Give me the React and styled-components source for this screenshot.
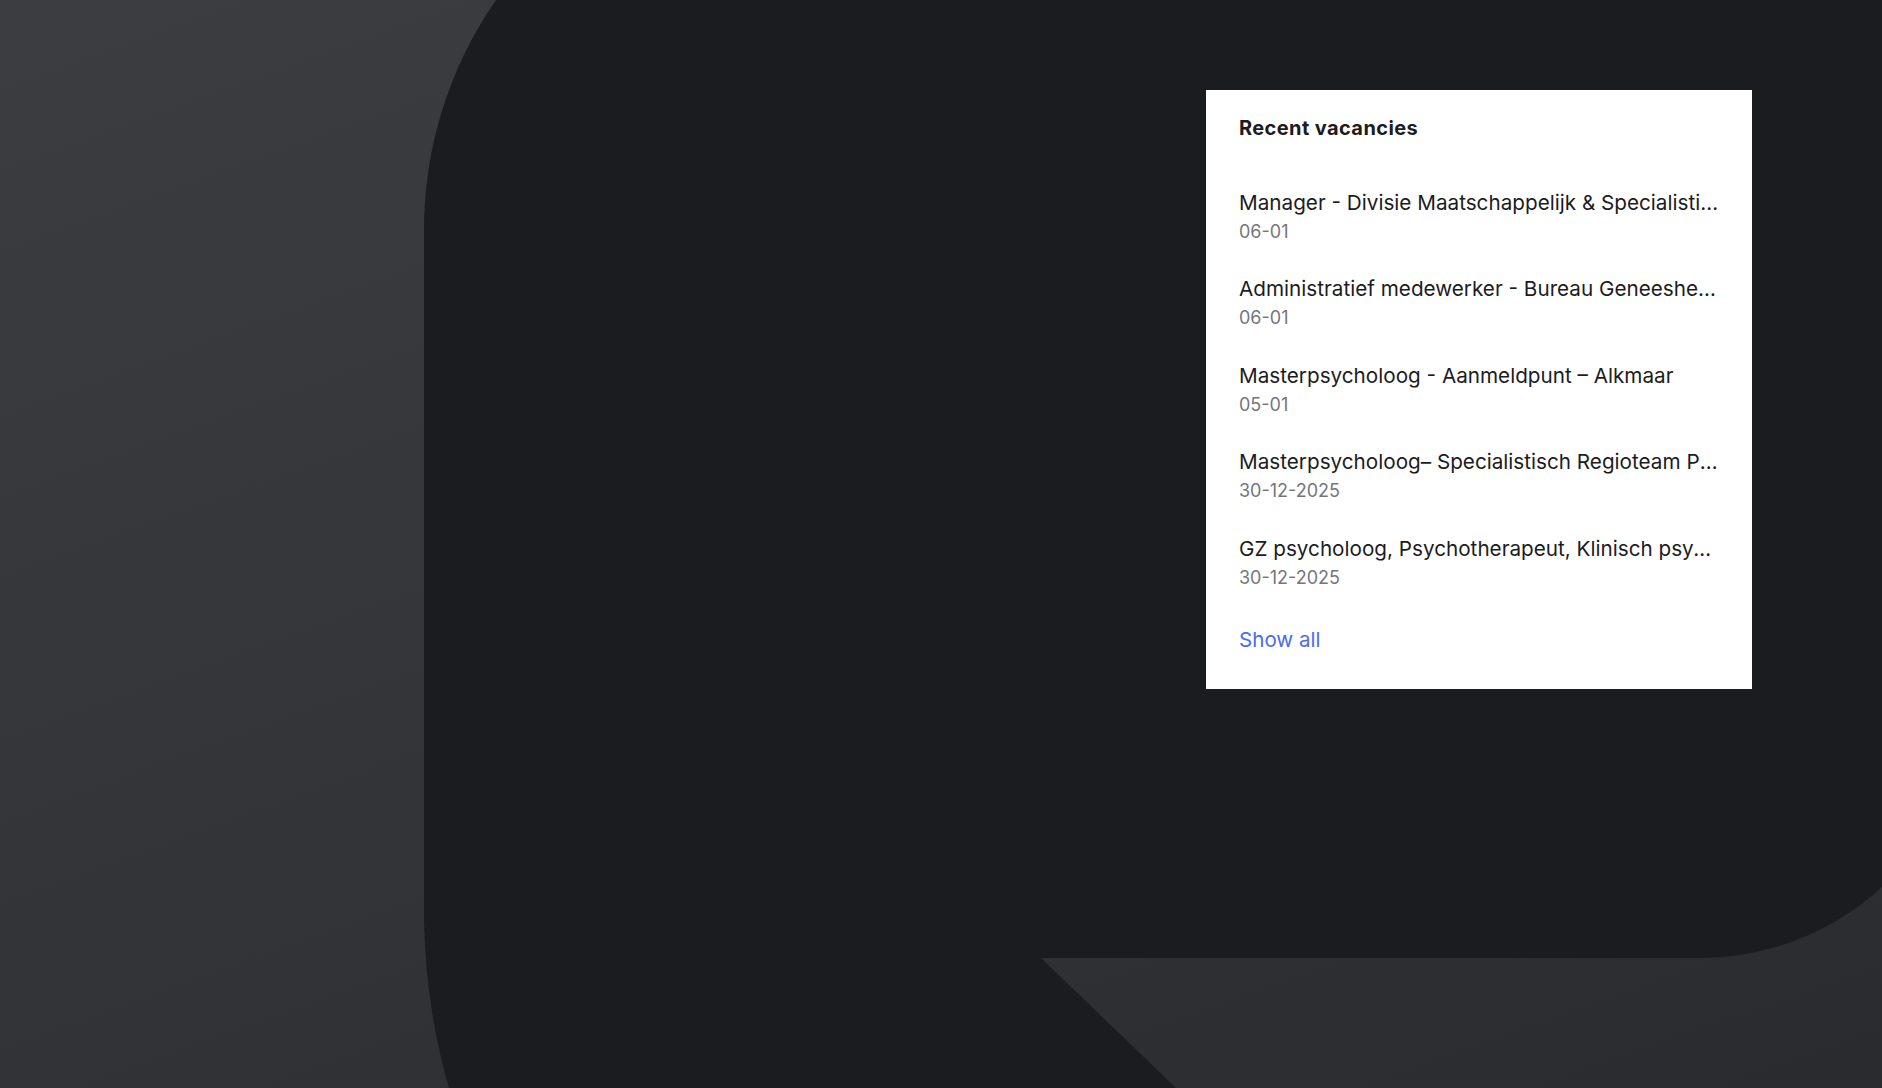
import React from 'react';
import styled, { createGlobalStyle } from 'styled-components';

const GlobalStyle = createGlobalStyle`
  html, body {
    margin: 0;
    padding: 0;
  }
  body {
    font-family: Inter, "Noto Sans", "Liberation Sans", sans-serif;
    -webkit-font-smoothing: antialiased;
  }
`;

const palette = {
  bgTop: '#3c3d41',
  bgBottom: '#2a2b2f',
  shape: '#1a1c1f',
  text: '#1c1c1e',
  muted: '#75767a',
  link: '#4a6cf0',
};

const vacancies = [
  { title: 'Manager - Divisie Maatschappelijk & Specialistische Zorg', date: '06-01' },
  { title: 'Administratief medewerker - Bureau Geneesheer-directeur', date: '06-01' },
  { title: 'Masterpsycholoog - Aanmeldpunt – Alkmaar', date: '05-01' },
  { title: 'Masterpsycholoog– Specialistisch Regioteam Purmerend', date: '30-12-2025' },
  { title: 'GZ psycholoog, Psychotherapeut, Klinisch psycholoog', date: '30-12-2025' },
];

const Page = styled.div`
  position: relative;
  width: 100vw;
  height: 100vh;
  overflow: hidden;
  background: linear-gradient(160deg, ${palette.bgTop} 0%, #333438 55%, ${palette.bgBottom} 100%);
  display: flex;
  justify-content: flex-end;
  align-items: flex-start;
  padding: 90px 130px 0 0;
  box-sizing: border-box;
`;

// the big logo shape behind the card
const Backdrop = styled.svg`
  position: absolute;
  inset: 0;
  width: 100%;
  height: 100%;
  pointer-events: none;
`;

const Card = styled.section`
  position: relative;
  width: 546px;
  background: #fff;
  padding: 24px 33px 35px;
  box-sizing: border-box;
`;

const Heading = styled.h2`
  margin: 0;
  font-size: 20px;
  line-height: 28px;
  font-weight: 700;
  color: ${palette.text};
  letter-spacing: 0.4px;
`;

const List = styled.ul`
  list-style: none;
  margin: 47px 0 0;
  padding: 0;
  display: flex;
  flex-direction: column;
  gap: 31.4px;
`;

const Item = styled.li`
  display: flex;
  flex-direction: column;
  min-width: 0;
`;

const ItemTitle = styled.a`
  display: block;
  font-size: 20.7px;
  line-height: 28px;
  color: ${palette.text};
  text-decoration: none;
  white-space: nowrap;
  overflow: hidden;
  text-overflow: ellipsis;
`;

const ItemDate = styled.span`
  margin-top: 3px;
  font-size: 18px;
  line-height: 24px;
  color: ${palette.muted};
`;

const ShowAll = styled.a`
  display: block;
  width: fit-content;
  margin-top: 36.5px;
  font-size: 20.6px;
  line-height: 28px;
  color: ${palette.link};
  text-decoration: none;
`;

export default function App() {
  return (
    <>
      <GlobalStyle />
      <Page>
        <Backdrop viewBox="0 0 1882 1088" preserveAspectRatio="none">
          <path
            fill={palette.shape}
            d="M 496 0 L 1882 0 L 1882 887 A 270 270 0 0 1 1700 958 L 1041 958 L 1176 1088 L 449 1088 Q 426 1010 424 920 L 424 230 A 403 403 0 0 1 496 0 Z"
          />
        </Backdrop>
        <Card>
          <Heading>Recent vacancies</Heading>
          <List>
            {vacancies.map((v) => (
              <Item key={v.title}>
                <ItemTitle href="#">{v.title}</ItemTitle>
                <ItemDate>{v.date}</ItemDate>
              </Item>
            ))}
          </List>
          <ShowAll href="#">Show all</ShowAll>
        </Card>
      </Page>
    </>
  );
}
